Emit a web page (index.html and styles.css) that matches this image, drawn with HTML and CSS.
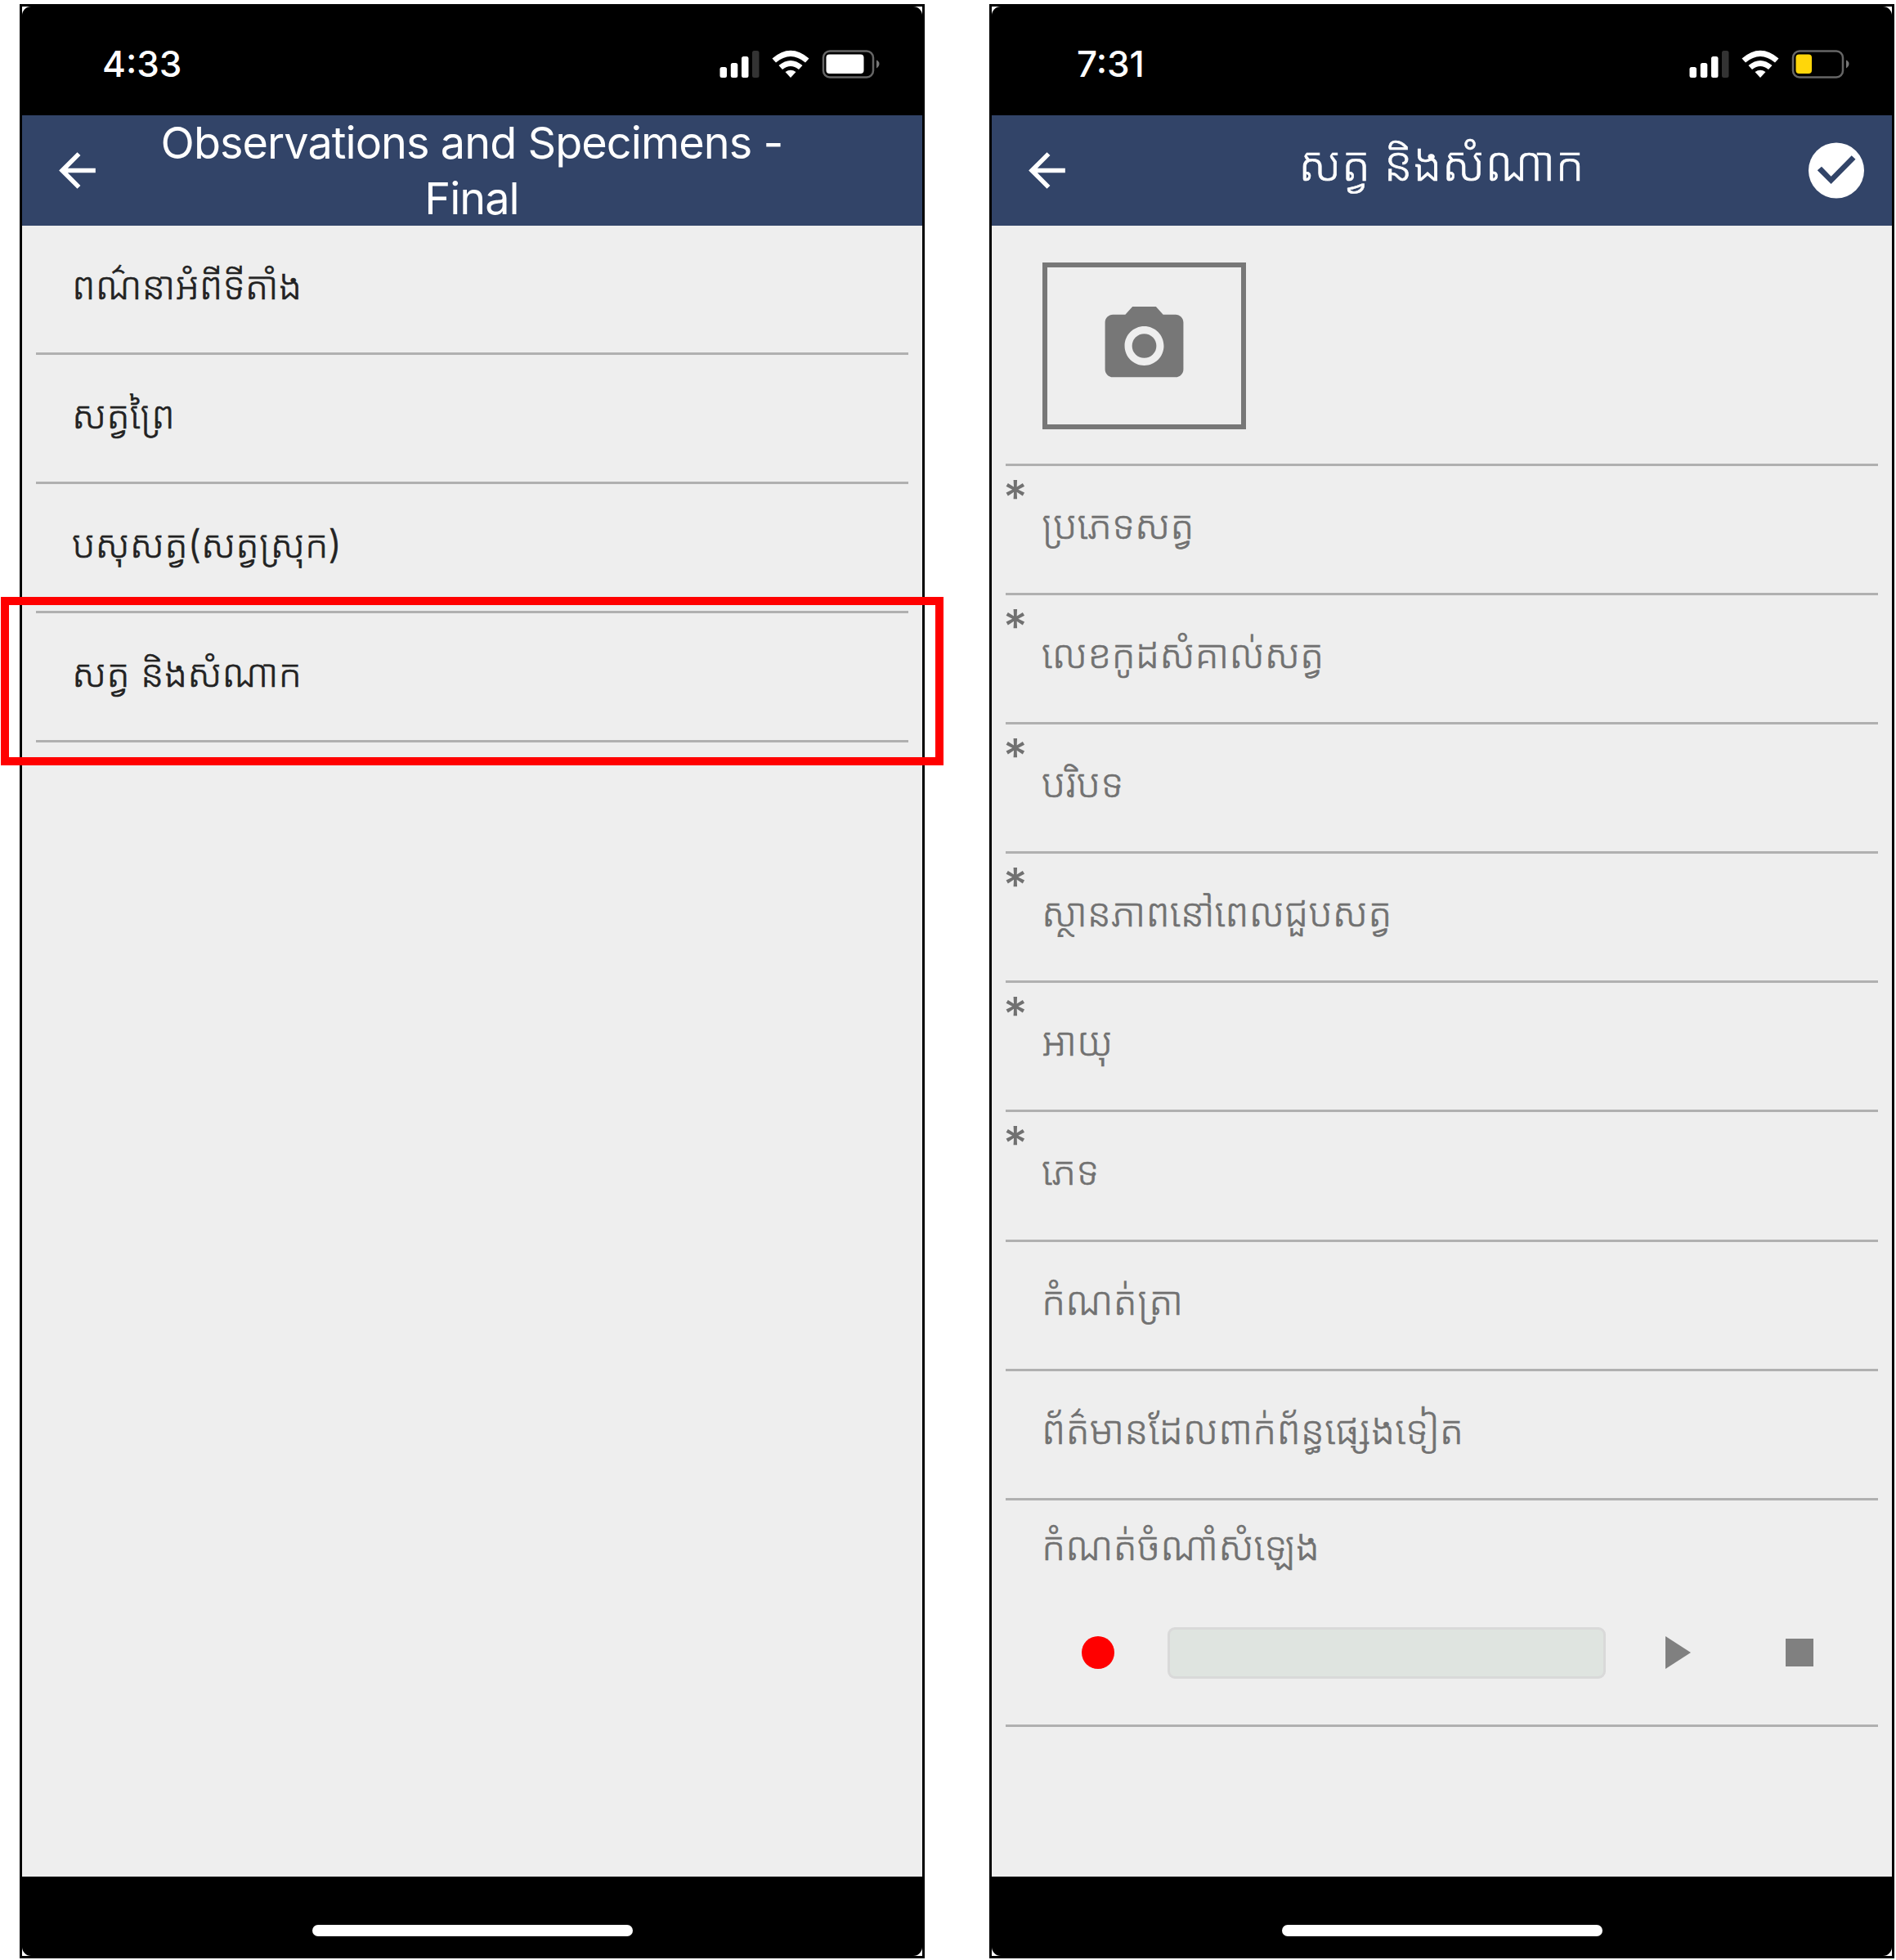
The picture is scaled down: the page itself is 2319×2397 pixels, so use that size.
FILE: index.html
```html
<!DOCTYPE html>
<html lang="km">
<head>
<meta charset="utf-8">
<title>Observations and Specimens</title>
<link rel="stylesheet" href="styles.css">
</head>
<body>
<main class="board">
  <section class="phone">
    <div class="screen">
      <div class="status">
        <span class="time">4:33</span>
        <svg class="indicators" width="196" height="36" viewBox="0 0 196 36">
          <g fill="#fff"><rect x="0.500" y="22" width="8.500" height="13" rx="2.5"/><rect x="13.800" y="17" width="8.500" height="18" rx="2.5"/><rect x="27" y="9" width="8.500" height="26" rx="2.5"/></g>
          <rect x="40" y="2" width="8.500" height="33" rx="2.5" fill="#333"/>
          <g fill="#fff"><path d="M64.500 11.500Q87-8 109.500 11.500L105 16.500Q87 1.500 69 16.500Z"/><path d="M72.500 20Q87 8 101.500 20L97 25Q87 17 77 25Z"/><path d="M80.500 28Q87 23.500 93.500 28L87 35Z"/></g>
          <rect x="127" y="2.500" width="61" height="32" rx="8" fill="none" stroke="#666" stroke-width="2.500"/>
          <path d="M192 13.500Q195.500 15 195.500 18T192 23.500Z" fill="#777"/>
          <rect x="130.500" y="6.500" width="46" height="23.500" rx="4" fill="#fff"/>
        </svg>
      </div>
      <header class="bar">
        <svg class="back" width="67" height="67" viewBox="0 0 24 24" fill="#fff"><path d="M20 11H7.830l5.590-5.590L12 4l-8 8 8 8 1.410-1.410L7.830 13H20z"/></svg>
        <h1 class="title latin">Observations and Specimens - Final</h1>
        <span class="side"></span>
      </header>
      <ul class="list dark">
        <li class="row"><span class="label">ពណ៌នាអំពីទីតាំង</span></li>
        <li class="row"><span class="label">សត្វព្រៃ</span></li>
        <li class="row"><span class="label">បសុសត្វ(សត្វស្រុក)</span></li>
        <li class="row"><span class="label">សត្វ និងសំណាក</span></li>
      </ul>
      <footer class="home"><span class="pill"></span></footer>
    </div>
    <div class="highlight"></div>
  </section>

  <section class="phone">
    <div class="screen">
      <div class="status late">
        <span class="time">7:31</span>
        <svg class="indicators" width="196" height="36" viewBox="0 0 196 36">
          <g fill="#fff"><rect x="0.500" y="22" width="8.500" height="13" rx="2.5"/><rect x="13.800" y="17" width="8.500" height="18" rx="2.5"/><rect x="27" y="9" width="8.500" height="26" rx="2.5"/></g>
          <rect x="40" y="2" width="8.500" height="33" rx="2.5" fill="#333"/>
          <g fill="#fff"><path d="M64.500 11.500Q87-8 109.500 11.500L105 16.500Q87 1.500 69 16.500Z"/><path d="M72.500 20Q87 8 101.500 20L97 25Q87 17 77 25Z"/><path d="M80.500 28Q87 23.500 93.500 28L87 35Z"/></g>
          <rect x="127" y="2.500" width="61" height="32" rx="8" fill="none" stroke="#666" stroke-width="2.500"/>
          <path d="M192 13.500Q195.500 15 195.500 18T192 23.500Z" fill="#777"/>
          <rect x="130.500" y="6.500" width="19.500" height="23.500" rx="4" fill="#ffd60a"/>
        </svg>
      </div>
      <header class="bar">
        <svg class="back" width="67" height="67" viewBox="0 0 24 24" fill="#fff"><path d="M20 11H7.830l5.590-5.590L12 4l-8 8 8 8 1.410-1.410L7.830 13H20z"/></svg>
        <h1 class="title khmer">សត្វ និងសំណាក</h1>
        <span class="side"><svg width="68" height="69" viewBox="0 0 68 69"><circle cx="34" cy="34.500" r="34" fill="#fff"/><path fill="#324468" d="M10.800 34.300L16 29.700L27.600 41.700L52.700 16.300L57.500 20.700L27.600 51Z"/></svg></span>
      </header>
      <ul class="list grey">
        <li class="photo"><span class="frame"><svg width="115" height="116" viewBox="0 0 24 24" fill="#777"><circle cx="12" cy="12" r="3.100"/><path d="M9 2L7.170 4H4c-1.100 0-2 .9-2 2v12c0 1.100.9 2 2 2h16c1.100 0 2-.9 2-2V6c0-1.100-.9-2-2-2h-3.170L15 2H9zm3 15c-2.760 0-5-2.240-5-5s2.240-5 5-5 5 2.240 5 5-2.240 5-5 5z"/></svg></span></li>
        <li class="row"><span class="star">*</span><span class="label">ប្រភេទសត្វ</span></li>
        <li class="row"><span class="star">*</span><span class="label">លេខកូដសំគាល់សត្វ</span></li>
        <li class="row"><span class="star">*</span><span class="label">បរិបទ</span></li>
        <li class="row"><span class="star">*</span><span class="label">ស្ថានភាពនៅពេលជួបសត្វ</span></li>
        <li class="row"><span class="star">*</span><span class="label">អាយុ</span></li>
        <li class="row"><span class="star">*</span><span class="label">ភេទ</span></li>
        <li class="row"><span class="label">កំណត់ត្រា</span></li>
        <li class="row"><span class="label">ព័ត៌មានដែលពាក់ព័ន្ធផ្សេងទៀត</span></li>
        <li class="audio">
          <span class="label">កំណត់ចំណាំសំឡេង</span>
          <div class="player">
            <span class="record"></span>
            <span class="track"></span>
            <svg class="play" width="32" height="40" viewBox="0 0 32 40"><path d="M0 0L31 20L0 40Z" fill="#808080"/></svg>
            <span class="stop"></span>
          </div>
        </li>
      </ul>
      <footer class="home"><span class="pill"></span></footer>
    </div>
  </section>
</main>
</body>
</html>
```
FILE: styles.css
```css
* { box-sizing: border-box; }
body { margin: 0; background: #fff; font-family: Inter, "Noto Sans Khmer", "Khmer OS", "Noto Sans", sans-serif; }
.board { display: flex; gap: 79px; padding: 5px 0 0 24px; height: 2397px; }
.phone { position: relative; flex: none; width: 1107px; height: 2390px; border: 3px solid #000; background: #fff; }
.screen { display: flex; flex-direction: column; height: 100%; border-radius: 11px; overflow: hidden; background: #eee; }
.status { flex: none; display: flex; justify-content: space-between; height: 133px; padding: 52px 52px 0 98px; background: #000; }
.time { color: #fff; font-size: 44px; line-height: 36px; font-weight: 550; }
.late { padding-left: 104px; }
.bar { flex: none; display: flex; align-items: center; height: 135px; padding: 0 33px 0 34px; background: #324468; }
.back { flex: none; }
.side { flex: none; width: 69px; height: 69px; }
.title { flex: 1; margin: 0; color: #fff; text-align: center; font-weight: 400; }
.latin { font-size: 54px; line-height: 68px; letter-spacing: -0.95px; padding: 0 60px; }
.khmer { font-size: 58px; line-height: 100px; padding-bottom: 18px; font-weight: 300; -webkit-text-stroke: 0.6px currentColor; }
.list { flex: 1; margin: 0; padding: 0 17px; list-style: none; }
.dark { color: #222; }
.grey { color: #717171; }
.row { display: flex; height: 158.1px; border-bottom: 3px solid #b0b0b0; }
.row .label { margin-left: 44px; }
.star + .label { margin-left: 0; }
.label { font-size: 46.600px; line-height: 147px; font-weight: 300; white-space: nowrap; -webkit-text-stroke: 0.6px currentColor; }
.grey .label { font-size: 47.800px; line-height: 145px; }
.star { width: 47px; margin-left: -3px; font-size: 57px; line-height: 77px; font-weight: 450; }
.photo { display: flex; height: 294px; padding: 45px; border-bottom: 3px solid #b0b0b0; }
.frame { display: flex; align-items: center; justify-content: center; width: 249px; height: 204px; border: 6px solid #777; }
.audio { height: 277px; padding: 0 45px 0 44px; border-bottom: 3px solid #b0b0b0; }
.grey .audio .label { display: block; height: 155px; line-height: 112px; }
.player { display: flex; align-items: center; height: 63px; padding-left: 49px; }
.record { width: 40px; height: 40px; border-radius: 50%; background: #f00; }
.track { width: 536px; height: 63px; margin-left: 65px; border: 3px solid #d9d9d9; border-radius: 9px; background: #dfe4e0; }
.play { margin-left: 73px; }
.stop { width: 34px; height: 34px; margin-left: 115px; background: #808080; }
.home { flex: none; display: flex; justify-content: center; height: 97px; padding-top: 59px; background: #000; }
.pill { width: 392px; height: 14px; border-radius: 7px; background: #fff; }
.highlight { position: absolute; left: -26px; top: 722px; width: 1153px; height: 206px; border: 10px solid #f00; }
```
